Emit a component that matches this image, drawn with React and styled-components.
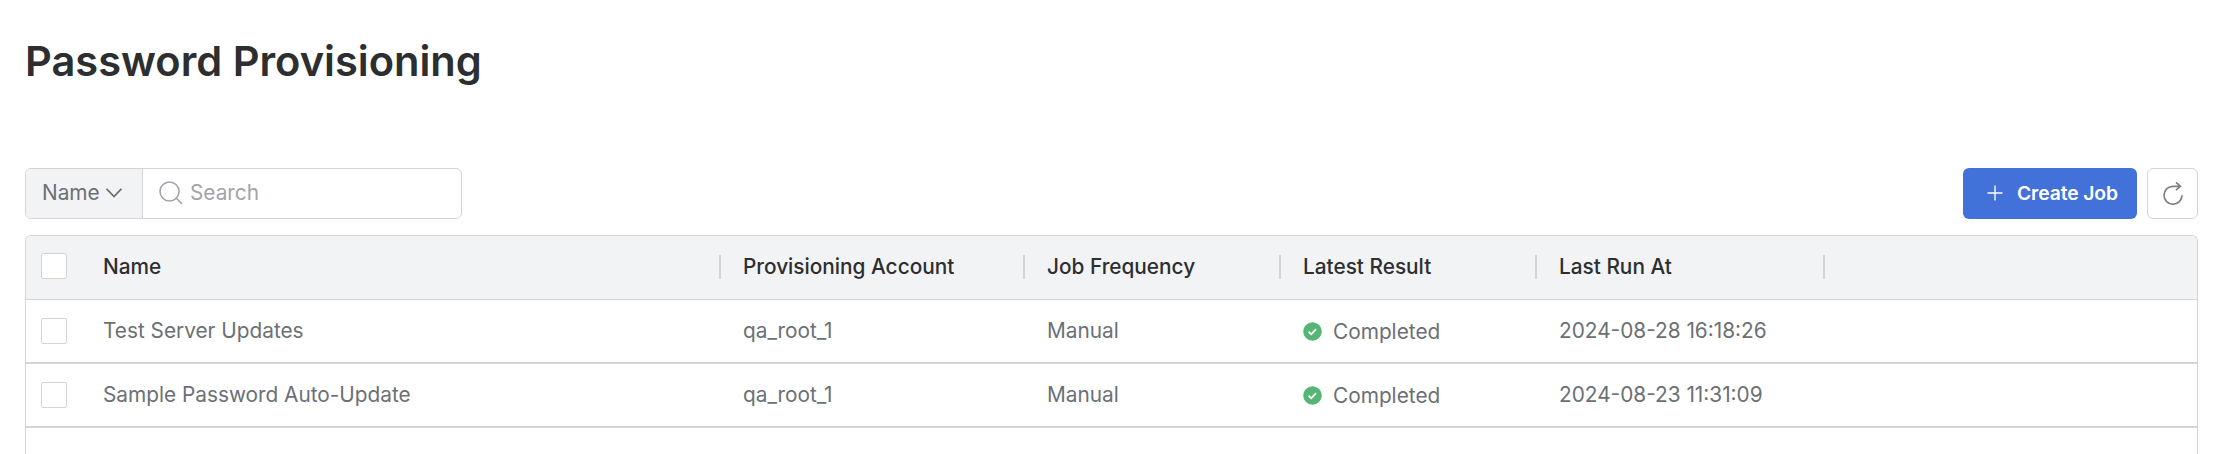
import React from "react";
import styled, { createGlobalStyle } from "styled-components";

const Global = createGlobalStyle`
  * { box-sizing: border-box; }
  html, body { margin: 0; background: #fff; overflow: hidden; }
  body { font-family: Inter, "Liberation Sans", sans-serif; font-size: 20.8px; line-height: 30px; color: #6b7075; }
`;

const Page = styled.main`
  display: flex;
  flex-direction: column;
  height: 454px;
  padding: 36px 24px 0 25px;
  overflow: hidden;
`;

const Title = styled.h1`
  margin: 0;
  height: 50px;
  font-size: 41.6px;
  line-height: 50px;
  font-weight: 600;
  color: #2c2e30;
`;

const Toolbar = styled.div`
  display: flex;
  gap: 10px;
  margin-top: 82px;
  height: 51px;
`;

const SearchGroup = styled.div`
  display: flex;
  width: 437px;
  margin-right: auto;
  border: 1px solid #d3d4d8;
  border-radius: 6px;
  overflow: hidden;
`;

const FieldPicker = styled.button`
  display: flex;
  align-items: center;
  gap: 6px;
  width: 117px;
  padding: 0 0 1px 16px;
  border: 0;
  border-right: 1px solid #d3d4d8;
  background: #f2f3f5;
  font: inherit;
  color: #6b7075;
`;

const SearchField = styled.div`
  display: flex;
  flex: 1;
  align-items: center;
  gap: 7px;
  padding: 0 0 1px 16px;
  color: #a0a4aa;
`;

const CreateButton = styled.button`
  display: flex;
  align-items: center;
  gap: 14px;
  width: 174px;
  padding: 0 0 1px 24px;
  border: 0;
  border-radius: 6px;
  background: #4171d9;
  color: #fff;
  font: 600 19.3px/30px Inter, sans-serif;
  letter-spacing: -0.1px;
  white-space: nowrap;
`;

const RefreshButton = styled.button`
  display: flex;
  align-items: center;
  justify-content: center;
  width: 51px;
  padding: 0;
  border: 1px solid #d3d4d8;
  border-radius: 6px;
  background: #fff;
  color: #7b8086;
`;

const Table = styled.section`
  flex: 1;
  margin-top: 16px;
  border: 1px solid #d3d4d8;
  border-bottom: 0;
  border-radius: 6px 6px 0 0;
  overflow: hidden;
`;

const Row = styled.div`
  display: grid;
  grid-template-columns: 54px 641px 304px 256px 256px 288px 1fr;
  align-items: center;
  height: 64px;
  padding-bottom: ${(p) => (p.$head ? 3 : 1)}px;
  border-bottom: ${(p) => (p.$head ? 1 : 2)}px solid #d3d4d8;
  background: ${(p) => (p.$head ? "#f2f3f5" : "#fff")};
`;

const HeadCell = styled.div`
  display: flex;
  align-items: center;
  justify-content: space-between;
  padding: 2px 0 0 ${(p) => (p.$first ? 23 : 22)}px;
  font-weight: 500;
  color: #2c2e30;
  white-space: nowrap;

  &::after {
    content: "";
    width: 2px;
    height: 24px;
    background: #d3d4d8;
  }
`;

const Cell = styled.div`
  padding-left: ${(p) => (p.$first ? 23 : 22)}px;
  white-space: nowrap;
`;

const Status = styled.div`
  display: flex;
  align-items: center;
  gap: 11px;
  padding: 2px 0 0 22px;
`;

const Checkbox = styled.span`
  width: 26px;
  height: 26px;
  margin-left: 15px;
  border: 1px solid #d3d4d8;
  border-radius: 2px;
  background: #fff;
`;

const Chevron = () => (
  <svg width="16" height="10" viewBox="0 0 16 10" fill="none" stroke="currentColor" strokeWidth="1.7">
    <path d="M.6 .8 8 8.6 15.4 .8" />
  </svg>
);

const SearchIcon = () => (
  <svg width="24" height="24" viewBox="0 0 24 24" fill="none" stroke="currentColor" strokeWidth="1.6">
    <circle cx="10.5" cy="10.5" r="9.5" />
    <path d="m17.3 17.3 5.6 5.6" />
  </svg>
);

const PlusIcon = () => (
  <svg width="16" height="16" viewBox="0 0 16 16" fill="none" stroke="currentColor" strokeWidth="1.4">
    <path d="M8 .5v15M.5 8h15" />
  </svg>
);

const RefreshIcon = () => (
  <svg width="22" height="24" viewBox="0 0 22 24" fill="none" stroke="currentColor" strokeWidth="1.7">
    <path d="M20 13.3a9 9 0 1 1-9-9h7.2M14 .4l4.4 3.9L14 8.2" />
  </svg>
);

const CheckIcon = () => (
  <svg width="19" height="19" viewBox="0 0 19 19" fill="none">
    <circle cx="9.5" cy="9.5" r="9.3" fill="#55b575" />
    <path d="m5.6 9.7 2.6 2.6 4.9-5.2" stroke="#fff" strokeWidth="1.8" />
  </svg>
);

const columns = ["Name", "Provisioning Account", "Job Frequency", "Latest Result", "Last Run At"];

const jobs = [
  { name: "Test Server Updates", account: "qa_root_1", frequency: "Manual", result: "Completed", lastRun: "2024-08-28 16:18:26" },
  { name: "Sample Password Auto-Update", account: "qa_root_1", frequency: "Manual", result: "Completed", lastRun: "2024-08-23 11:31:09" },
];

export default function App() {
  return (
    <>
      <Global />
      <Page>
        <Title>Password Provisioning</Title>
        <Toolbar>
          <SearchGroup>
            <FieldPicker>Name<Chevron /></FieldPicker>
            <SearchField><SearchIcon />Search</SearchField>
          </SearchGroup>
          <CreateButton><PlusIcon />Create Job</CreateButton>
          <RefreshButton aria-label="Refresh"><RefreshIcon /></RefreshButton>
        </Toolbar>
        <Table>
          <Row $head>
            <Checkbox />
            {columns.map((c, i) => <HeadCell key={c} $first={i === 0}>{c}</HeadCell>)}
          </Row>
          {jobs.map((j) => (
            <Row key={j.name}>
              <Checkbox />
              <Cell $first>{j.name}</Cell>
              <Cell>{j.account}</Cell>
              <Cell>{j.frequency}</Cell>
              <Status><CheckIcon />{j.result}</Status>
              <Cell>{j.lastRun}</Cell>
            </Row>
          ))}
        </Table>
      </Page>
    </>
  );
}
